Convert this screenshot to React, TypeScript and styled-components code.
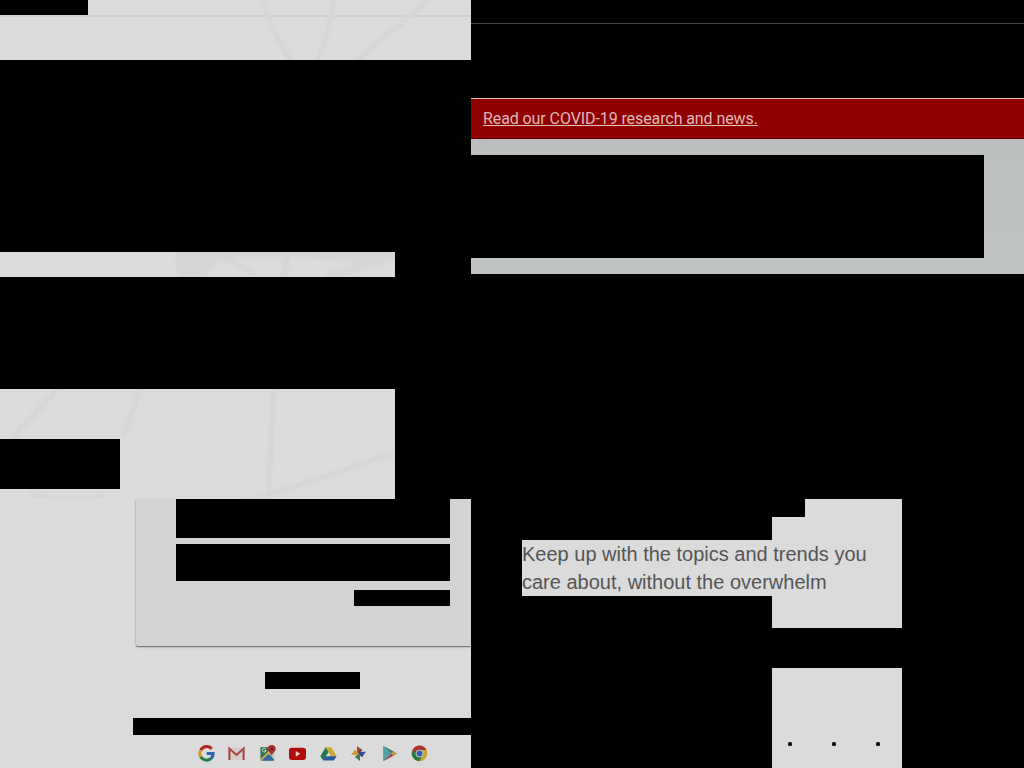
import React from 'react';
import styled, { createGlobalStyle } from 'styled-components';

const GlobalStyle = createGlobalStyle`
  *, *::before, *::after { box-sizing: border-box; }
  body { margin: 0; background: #000; font-family: 'Liberation Sans', Arial, sans-serif; overflow: hidden; }
`;

const Page = styled.main`
  display: grid;
  grid-template-columns: 471px 553px;
  grid-template-rows: 499px 269px;
  width: 1024px;
  height: 768px;
  background: #000;
`;

const Panel = styled.section`
  display: flex;
  flex-direction: column;
  min-width: 0;
  overflow: hidden;
`;

const Block = styled.div<{ $w?: number; $h: number; $ml?: number; $mt?: number }>`
  flex: none;
  z-index: 1;
  width: ${p => (p.$w ? `${p.$w}px` : 'auto')};
  height: ${p => p.$h}px;
  margin-left: ${p => p.$ml ?? 0}px;
  margin-top: ${p => p.$mt ?? 0}px;
  background: #000;
`;

const Strip = styled.div<{ $w: number; $h: number }>`
  flex: none;
  display: grid;
  width: ${p => p.$w}px;
  height: ${p => p.$h}px;
  background: #dbdbdb;
  overflow: hidden;
  & > * { grid-area: 1 / 1; }
`;

const Web = styled.svg`
  display: block;
  fill: none;
  stroke: #d5d5d5;
  stroke-width: 5;
  filter: blur(1px);
`;

const HeaderRule = styled.div`
  height: 17px;
  border-bottom: 2px solid #d0d0d4;
`;

const TopBar = styled.div`
  height: 24px;
  border-bottom: 1px solid #414141;
`;

const Notice = styled.div`
  display: flex;
  align-items: center;
  height: 41px;
  margin-top: 74px;
  padding: 0 12px;
  background: #900000;
  border-top: 1px solid #ddbfb9;
  border-bottom: 1px solid #650000;
`;

const NoticeLink = styled.a`
  color: #dfb9b9;
  font: 16px/20px Roboto, sans-serif;
  letter-spacing: -0.09px;
  text-decoration: underline;
  text-decoration-thickness: 1px;
  text-underline-offset: 1px;
`;

const Hero = styled.div`
  height: 135px;
  padding-top: 15px;
  background: linear-gradient(#bbbfc0, #bfc3c4);
  border-top: 1px solid #c6b9bb;
`;

const SignIn = styled(Panel)`
  background: #dbdbdb;
`;

const Card = styled.div`
  flex: none;
  height: 147px;
  margin-left: 136px;
  padding-left: 40px;
  background: #d3d3d3;
  border-bottom-left-radius: 2px;
  box-shadow: 0 1px 2px rgba(0, 0, 0, 0.45), 0 1px 0 rgba(0, 0, 0, 0.15);
`;

const Apps = styled.div`
  display: flex;
  gap: 13.5px;
  margin: 10px 0 0 197.5px;
`;

const AppIcon = styled.svg`
  flex: none;
  display: block;
  width: 17px;
  height: 17px;
`;

const Feature = styled(Panel)`
  align-items: flex-end;
  padding-right: 122px;
`;

const Paper = styled.div<{ $w: number; $h: number }>`
  flex: none;
  width: ${p => p.$w}px;
  height: ${p => p.$h}px;
  background: #dbdbdb;
`;

const Caption = styled.p`
  flex: none;
  width: 380px;
  height: 56px;
  margin: 0;
  background: #dbdbdb;
  color: #555;
  font-size: 20px;
  line-height: 28px;
`;

const DotRow = styled(Paper)`
  display: flex;
  gap: 40px;
  margin-top: 40px;
  padding: 74px 0 0 16px;
`;

const Dot = styled.span`
  width: 4px;
  height: 4px;
  border-radius: 1.5px;
  background: #101010;
`;

function AppIcons() {
  return (
    <Apps>
      <AppIcon viewBox="0 0 24 24" fill="none" strokeWidth="4.4">
        <path d="M19.4 5.4A9.5 9.5 0 0 0 3.8 7.4" stroke="#b02a21" />
        <path d="M3.8 7.4a9.5 9.5 0 0 0 0 9.2" stroke="#d0a026" />
        <path d="M3.8 16.6a9.5 9.5 0 0 0 14.5 2.5" stroke="#267e40" />
        <path d="M18.3 19.1A9.5 9.5 0 0 0 21.3 12H12.3" stroke="#2f63b0" />
      </AppIcon>
      <AppIcon viewBox="0 0 24 24">
        <path d="M1 4h22v17H1z" fill="#d4cecd" />
        <path d="M2 21V5l10 9 10-9v16" fill="none" stroke="#aa4640" strokeWidth="3" />
      </AppIcon>
      <AppIcon viewBox="0 0 24 24">
        <path d="M2 3h19v19H2z" fill="#2d7650" />
        <path d="M14 12 20 8l2 1v13z" fill="#c2c4c5" />
        <path d="m2 20 15-15 3 3L5 22H2z" fill="#c7ae55" />
        <path d="m4 22 9-9 9 9z" fill="#3565a6" />
        <path d="M10 7.5H7.5M9.3 5.3A2.7 2.7 0 1 0 10 8" fill="none" stroke="#d9dedb" strokeWidth="1.3" />
        <path d="M18 0a5.5 5.5 0 0 0-5.5 5.5c0 4 4.5 4.5 5.5 10 1-5.5 5.5-6 5.5-10A5.5 5.5 0 0 0 18 0z" fill="#a92c28" />
        <circle cx="18" cy="5.5" r="1.8" fill="#651d1b" />
      </AppIcon>
      <AppIcon viewBox="0 0 24 24">
        <rect y="4" width="24" height="17" rx="4" fill="#b10b0b" />
        <path d="m9.5 8.5 6.5 4-6.5 4z" fill="#dfcfce" />
      </AppIcon>
      <AppIcon viewBox="0 0 24 24">
        <path d="M8 3h8l7.5 13h-8z" fill="#d0aa2f" />
        <path d="m8 3 4 7L4.5 22 .5 16z" fill="#23784a" />
        <path d="M8 16h15.5l-4 6h-15z" fill="#2859a1" />
      </AppIcon>
      <AppIcon viewBox="0 0 24 24">
        <path d="M10 1.5 17 7l-4.5 5H10z" fill="#b63a32" />
        <path d="M22.5 9.5 17 17l-5-5V9.5z" fill="#344f91" />
        <path d="M14 22.5 7 17l5-5h2z" fill="#39784b" />
        <path d="M1.5 14 7 6.5l5 5.5v2z" fill="#c79e31" />
        <path d="m12 12 5-5-2-1.5zM12 12l5 5 1.5-2z" fill="#532e48" />
      </AppIcon>
      <AppIcon viewBox="0 0 24 24">
        <path d="M3 1v22l11-11z" fill="#4aa6a4" />
        <path d="m3 1 15 8-4 3z" fill="#467a6b" />
        <path d="m18 9 5 3-5 3-4-3z" fill="#b99b41" />
        <path d="m14 12 4 3L3 23z" fill="#a24a50" />
      </AppIcon>
      <AppIcon viewBox="0 0 24 24">
        <circle cx="12" cy="12" r="11" fill="#c9a531" />
        <path d="M2.5 6.5A11 11 0 0 1 22 7H12a5 5 0 0 0-4.5 7.5z" fill="#ab352e" />
        <path d="M2.5 6.5A11 11 0 0 0 11.5 23l4.8-8A5 5 0 0 1 7.5 14.5z" fill="#2b7746" />
        <circle cx="12" cy="12" r="5.4" fill="#d0d4d4" />
        <circle cx="12" cy="12" r="4.2" fill="#2d60ad" />
      </AppIcon>
    </Apps>
  );
}

export default function App() {
  return (
    <>
      <GlobalStyle />
      <Page>
        <Panel>
          <Strip $w={471} $h={60}>
            <Web width="471" height="60">
              <path d="M261-4 272 27 292 64M334-4Q331 25 317 64M430-4C409 22 379 36 355 64" />
            </Web>
            <HeaderRule><Block $w={88} $h={15} /></HeaderRule>
          </Strip>
          <Block $h={192} />
          <Strip $w={395} $h={25}>
            <Web width="395" height="25">
              <path d="M175-3h224v11l-65 17-12-2 36-13-68-4-3 20h-7l2-19-50-1 25 15h-10l-28-14-14 18h-24l-5-4z" fill="#d5d5d5" stroke="none" />
            </Web>
          </Strip>
          <Block $h={112} />
          <Strip $w={395} $h={110}>
            <Web width="395" height="110">
              <path d="M62-4C44 15 28 30 10 52M141-4Q134 22 122 48M274-4 268 114M399 63C350 78 315 93 245 112M30 105Q76 117 104 106" />
            </Web>
            <Block $w={120} $h={50} $mt={50} />
          </Strip>
        </Panel>

        <Panel>
          <TopBar />
          <Notice><NoticeLink>Read our COVID-19 research and news.</NoticeLink></Notice>
          <Hero><Block $w={513} $h={103} /></Hero>
        </Panel>

        <SignIn>
          <Card>
            <Block $w={274} $h={39} />
            <Block $w={274} $h={37} $mt={6} />
            <Block $w={96} $h={16} $mt={9} $ml={178} />
          </Card>
          <Block $w={95} $h={17} $mt={26} $ml={265} />
          <Block $w={338} $h={17} $mt={29} $ml={133} />
          <AppIcons />
        </SignIn>

        <Feature>
          <Paper $w={97} $h={18} />
          <Paper $w={130} $h={23} />
          <Caption>Keep up with the topics and trends you<br />care about, without the overwhelm</Caption>
          <Paper $w={130} $h={32} />
          <DotRow $w={130} $h={100}><Dot /><Dot /><Dot /></DotRow>
        </Feature>
      </Page>
    </>
  );
}
